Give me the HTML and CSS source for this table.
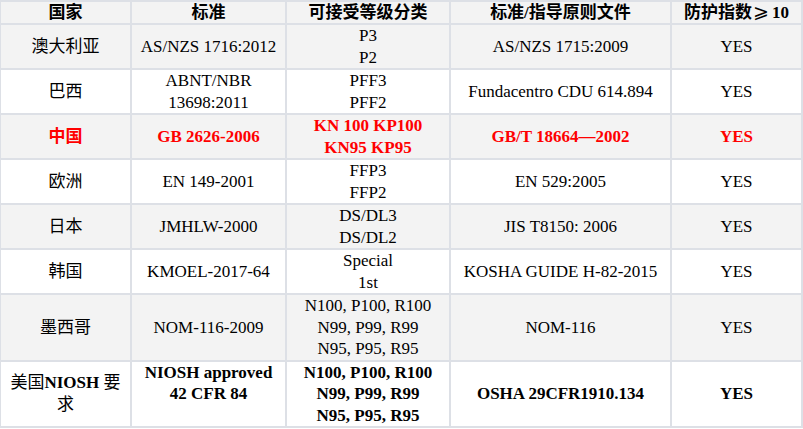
FILE: index.html
```html
<!DOCTYPE html>
<html lang="zh">
<head>
<meta charset="utf-8">
<title>口罩标准对比</title>
<link rel="stylesheet" href="styles.css">
</head>
<body>
<table class="grid">
  <colgroup>
    <col class="c1"><col class="c2"><col class="c3"><col class="c4"><col class="c5">
  </colgroup>
  <thead>
    <tr class="alt head">
      <th>国家</th><th>标准</th><th>可接受等级分类</th><th>标准/指导原则文件</th><th>防护指数<span class="geq">⩾</span>10</th>
    </tr>
  </thead>
  <tbody>
    <tr class="alt">
      <td>澳大利亚</td><td>AS/NZS 1716:2012</td><td>P3<br>P2</td><td>AS/NZS 1715:2009</td><td>YES</td>
    </tr>
    <tr>
      <td>巴西</td><td>ABNT/NBR<br>13698:2011</td><td>PFF3<br>PFF2</td><td>Fundacentro CDU 614.894</td><td>YES</td>
    </tr>
    <tr class="alt hl">
      <td>中国</td><td>GB 2626-2006</td><td>KN 100 KP100<br>KN95 KP95</td><td>GB/T 18664—2002</td><td>YES</td>
    </tr>
    <tr>
      <td>欧洲</td><td>EN 149-2001</td><td>FFP3<br>FFP2</td><td>EN 529:2005</td><td>YES</td>
    </tr>
    <tr class="alt">
      <td>日本</td><td>JMHLW-2000</td><td>DS/DL3<br>DS/DL2</td><td>JIS T8150: 2006</td><td>YES</td>
    </tr>
    <tr>
      <td>韩国</td><td>KMOEL-2017-64</td><td>Special<br>1st</td><td>KOSHA GUIDE H-82-2015</td><td>YES</td>
    </tr>
    <tr class="alt">
      <td>墨西哥</td><td>NOM-116-2009</td><td>N100, P100, R100<br>N99, P99, R99<br>N95, P95, R95</td><td>NOM-116</td><td>YES</td>
    </tr>
    <tr class="us">
      <td>美国<b>NIOSH</b> 要求</td><td class="b">NIOSH approved<br>42 CFR 84<br>&nbsp;</td><td class="b">N100, P100, R100<br>N99, P99, R99<br>N95, P95, R95</td><td class="b">OSHA 29CFR1910.134</td><td class="b">YES</td>
    </tr>
  </tbody>
</table>
</body>
</html>
```

FILE: styles.css
```css
html, body {
  margin: 0;
  padding: 0;
  background: #ffffff;
}

.grid {
  border-collapse: separate;
  border-spacing: 2px;
  background: #dde0e6;
  table-layout: fixed;
  width: 804px;
  margin: -0.5px 0 0 -1px;
  font-family: "Liberation Serif", "Noto Sans CJK SC", "DejaVu Serif", serif;
  font-size: 17px;
  line-height: 21.5px;
  color: #000000;
}

.c1 { width: 129px; }
.c2 { width: 153px; }
.c3 { width: 162px; }
.c4 { width: 219px; }
.c5 { width: 129px; }

.grid th,
.grid td {
  background: #ffffff;
  padding: 0 8px;
  text-align: center;
  vertical-align: middle;
  font-weight: normal;
}

.grid tr.alt th,
.grid tr.alt td {
  background: #f3f3f3;
}

.grid .head th {
  font-weight: bold;
  white-space: nowrap;
  padding: 0 2px;
}

.geq {
  font-family: "DejaVu Sans", sans-serif;
  font-weight: normal;
  font-size: 19px;
  line-height: 19px;
  margin: 0 3px 0 1px;
}

.grid .hl td {
  color: #ff0000;
  font-weight: bold;
}

.grid .us .b {
  font-weight: bold;
}
```
